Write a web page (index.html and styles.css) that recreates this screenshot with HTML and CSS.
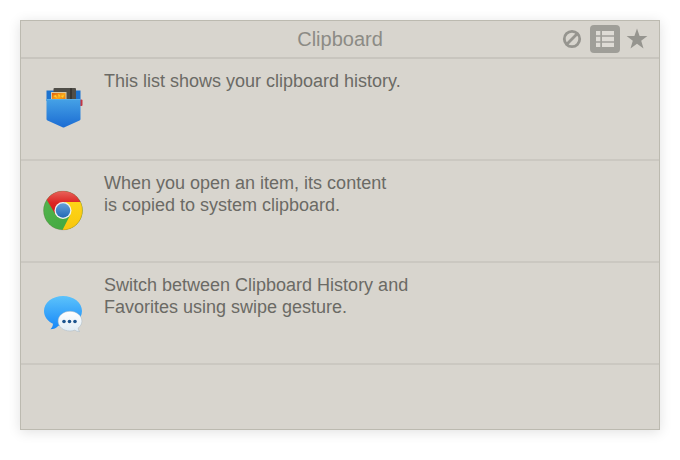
FILE: index.html
```html
<!DOCTYPE html>
<html lang="en">
<head>
<meta charset="utf-8">
<meta name="viewport" content="width=device-width, initial-scale=1">
<title>Clipboard</title>
<link rel="stylesheet" href="styles.css">
</head>
<body>
<main class="panel">
  <header class="bar">
    <h1 class="title">Clipboard</h1>
    <nav class="tools" aria-label="Clipboard views">
      <button class="tool" type="button" aria-label="Clear">
        <svg width="30" height="28" viewBox="0 0 30 28" fill="none" stroke="currentColor" stroke-width="2.800"><circle cx="15" cy="14" r="7.700"/><path d="M9.800 19.200 20.200 8.800"/></svg>
      </button>
      <button class="tool tool-active" type="button" aria-label="History" aria-pressed="true">
        <svg width="30" height="28" viewBox="0 0 30 28" fill="currentColor"><path d="M6 6h4.300v4.300H6zM12 6h12v4.300H12zM6 11.800h4.300v4.400H6zM12 11.800h12v4.400H12zM6 17.700h4.300V22H6zM12 17.700h12V22H12z"/></svg>
      </button>
      <button class="tool" type="button" aria-label="Favorites">
        <svg width="30" height="28" viewBox="0 0 30 28" fill="currentColor"><path d="M14 3.500 16.600 11H24.400L18.200 15.700 20.500 23.400 14 18.800 7.500 23.400 9.800 15.700 3.600 11H11.400Z"/></svg>
      </button>
    </nav>
  </header>
  <ul class="list">
    <li class="item">
      <svg class="icon" viewBox="0 0 40 46" aria-hidden="true">
        <defs>
          <linearGradient id="pocket" x1="0" y1="0" x2="0" y2="1"><stop offset="0" stop-color="#46a2e6"/><stop offset="1" stop-color="#1b6cd3"/></linearGradient>
          <linearGradient id="photo" x1="0" y1="0" x2="1" y2="1"><stop offset="0" stop-color="#e0600c"/><stop offset=".5" stop-color="#fba51a"/><stop offset="1" stop-color="#e06808"/></linearGradient>
        </defs>
        <path d="M3.500 4.500h34V15h-34z" fill="#1b72cf"/>
        <path d="M34 13.500h4.500q1 0 1 1v4.500q0 1-1 1H34z" fill="#c33643"/>
        <rect x="10.500" y="2" width="22.500" height="15" rx="1" fill="#504e48"/>
        <path d="M28 2.300V16" stroke="#302f2b" stroke-width="1.500"/>
        <rect x="8" y="6" width="15.500" height="10" fill="#d9c9a4"/>
        <rect x="9" y="7" width="13.500" height="9" fill="url(#photo)"/>
        <path d="m10 10 3-1 1 3zM15 8l2 1-1 3zM18 10l3-1-1 3z" fill="#ffd12e"/>
        <path d="M3.500 13h34V33q0 1-1 1.500L21.500 41.300q-1 .5-2 0L4.500 34.500q-1-.5-1-1.500z" fill="url(#pocket)"/>
        <path d="M3.500 13.500h34" stroke="#58aeea" stroke-width="1"/>
      </svg>
      <p class="text">This list shows your clipboard history.</p>
    </li>
    <li class="item">
      <svg class="icon" viewBox="0 0 40 46" aria-hidden="true">
        <defs>
          <linearGradient id="red" x1="0" y1="0" x2="0" y2="1"><stop offset="0" stop-color="#e8635a"/><stop offset=".5" stop-color="#dc2523"/><stop offset="1" stop-color="#cf1715"/></linearGradient>
          <linearGradient id="green" x1="0" y1="0" x2="1" y2="1"><stop offset="0" stop-color="#56b64f"/><stop offset="1" stop-color="#3da53c"/></linearGradient>
          <linearGradient id="yellow" x1="0" y1="0" x2="0" y2="1"><stop offset="0" stop-color="#fed517"/><stop offset="1" stop-color="#f8c60e"/></linearGradient>
          <linearGradient id="core" x1="0" y1="0" x2="0" y2="1"><stop offset="0" stop-color="#639fd8"/><stop offset="1" stop-color="#2369b5"/></linearGradient>
        </defs>
        <g transform="translate(0 1)">
          <circle cx="20" cy="21.500" r="19.600" fill="url(#green)"/>
          <path d="M3.700 10.700A19.600 19.600 0 0 1 37.600 13H20L12.700 25.800Z" fill="url(#red)"/>
          <path d="M37.600 13A19.600 19.600 0 0 1 19.500 41.100l7.800-15.400L22 13Z" fill="url(#yellow)"/>
          <circle cx="20" cy="21.500" r="8.500" fill="#f2f2ef"/>
          <circle cx="20" cy="21.500" r="7.200" fill="url(#core)"/>
          <circle cx="20" cy="21.500" r="19.400" fill="none" stroke="#6c4534" stroke-opacity=".3" stroke-width=".6"/>
        </g>
      </svg>
      <p class="text">When you open an item, its content<br>is copied to system clipboard.</p>
    </li>
    <li class="item">
      <svg class="icon" viewBox="0 0 40 46" aria-hidden="true">
        <defs>
          <linearGradient id="bubble" x1="0" y1="0" x2="0" y2="1"><stop offset="0" stop-color="#5cc3fb"/><stop offset="1" stop-color="#1687f8"/></linearGradient>
          <linearGradient id="reply" x1="0" y1="0" x2="0" y2="1"><stop offset="0" stop-color="#fff"/><stop offset="1" stop-color="#e0ecf5"/></linearGradient>
        </defs>
        <g transform="translate(0 3)">
          <path d="M20 3C9.500 3 1 9.500 1 18c0 5.500 3.500 10.200 9 12.800-.1 2.200-1 4-2.600 5.500 3.300 0 6-1.200 8-3.600 1.500.3 3 .4 4.600.4 10.500 0 19-6.700 19-15.100S30.500 3 20 3Z" fill="url(#bubble)"/>
          <path d="M27 18.300c-6.600 0-11.900 4.400-11.900 9.900S20.400 38 27 38c1.700 0 3.400-.3 4.900-.9 1.300 1 2.800 1.500 4.600 1.500-.9-1-1.400-2.300-1.400-3.600 2.400-1.700 3.800-4.100 3.800-6.800 0-5.500-5.300-9.900-11.900-9.900Z" fill="url(#reply)" stroke="#a6b6c2" stroke-width=".5"/>
          <g fill="#1c548e"><circle cx="21" cy="28.500" r="1.800"/><circle cx="26.500" cy="28.500" r="1.800"/><circle cx="32" cy="28.500" r="1.800"/></g>
        </g>
      </svg>
      <p class="text">Switch between Clipboard History and<br>Favorites using swipe gesture.</p>
    </li>
  </ul>
</main>
</body>
</html>
```
FILE: styles.css
```css
* {
  box-sizing: border-box;
}

body {
  display: flex;
  min-height: 100vh;
  margin: 0;
  padding: 20px 20px 30px;
  background: #fff;
  font-family: "Liberation Sans", Arial, sans-serif;
}

.panel {
  flex: 1;
  background: #d8d5ce;
  border: 1px solid #bcbab0;
  box-shadow: 0 2px 12px rgba(0, 0, 0, 0.12);
}

.bar {
  display: grid;
  grid-template-columns: 1fr auto 1fr;
  align-items: center;
  padding: 4px 6px;
  border-bottom: 2px solid #c8c5be;
}

.title {
  grid-column: 2;
  margin: 0;
  color: #8c8b85;
  font-size: 20px;
  font-weight: 400;
  line-height: 28px;
}

.tools {
  display: flex;
  justify-content: flex-end;
  gap: 3px;
}

.tool {
  display: flex;
  padding: 0;
  background: none;
  border: 0;
  border-radius: 4px;
  color: #96958f;
}

.tool-active {
  background: #9f9e98;
  color: #dedbd5;
}

.list {
  margin: 0;
  padding: 0;
  list-style: none;
}

.item {
  display: flex;
  gap: 21px;
  min-height: 102px;
  padding: 11px 22px;
  border-bottom: 2px solid #cbc8c1;
}

.icon {
  flex: none;
  width: 40px;
  height: 46px;
  margin-top: 16px;
}

.text {
  margin: 0;
  color: #6b6a65;
  font-size: 18px;
  line-height: 22px;
}
```
